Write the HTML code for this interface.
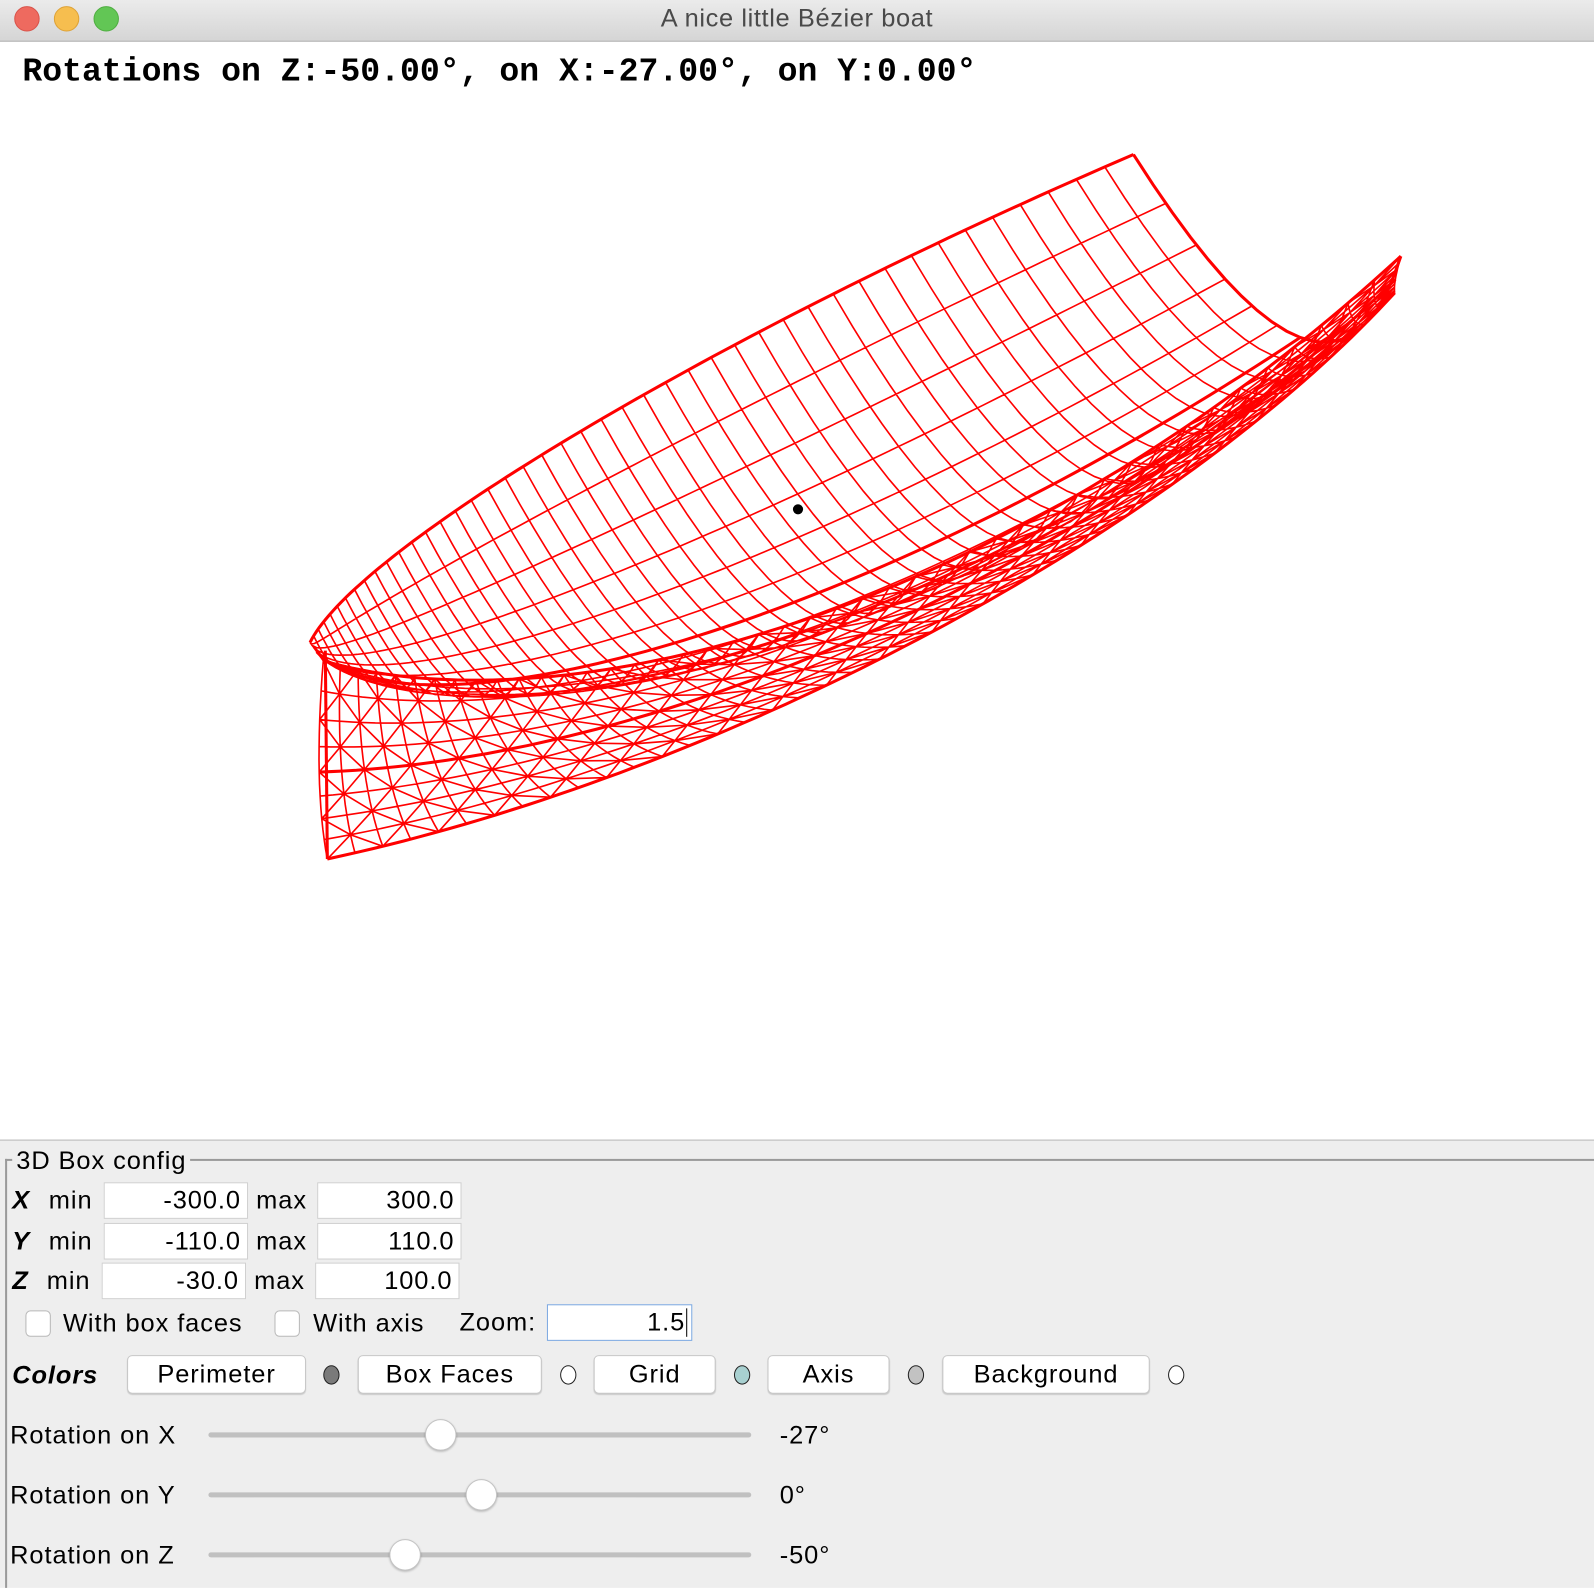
<!DOCTYPE html>
<html><head><meta charset="utf-8"><style>
html,body{margin:0;padding:0;width:1594px;height:1592px;overflow:hidden;background:#fff}
#root{position:absolute;left:0;top:0;width:1568px;height:1566px;transform:scale(1.01658);transform-origin:0 0;font-family:"Liberation Sans",sans-serif;color:#000}
.abs{position:absolute}
#tb{left:0;top:0;width:1568px;height:40px;background:linear-gradient(#ebebeb,#d5d5d5);border-bottom:1px solid #a8a8a8}
.tl{position:absolute;top:6px;width:23px;height:23px;border-radius:50%}
#title{left:0;width:1568px;top:4px;text-align:center;font-size:25px;letter-spacing:0.6px;color:#4a4a4a}
#rot{left:22px;top:52px;font-family:"Liberation Mono",monospace;font-weight:bold;font-size:32.6px;white-space:pre}
#panel{left:0;top:1121px;width:1568px;height:440px;background:#eeeeee;border-top:1px solid #b8b8b8}
.lbl{position:absolute;font-size:25px;line-height:30px;white-space:pre;letter-spacing:0.9px}
.fld{position:absolute;background:#fff;border:1px solid #d0d0d0;box-sizing:border-box;height:36px;font-size:25px;line-height:34px;text-align:right;padding-right:6px;letter-spacing:0.9px}
.cb{position:absolute;width:25px;height:26px;background:#fff;border:1px solid #b8b8b8;border-radius:5px;box-sizing:border-box}
.btn{position:absolute;height:38px;background:#fff;border:1px solid #c8c8c8;border-radius:5px;box-sizing:border-box;font-size:25px;line-height:36px;text-align:center;box-shadow:0 1px 1px rgba(0,0,0,.15);letter-spacing:0.9px}
.dot{position:absolute;width:16px;height:19px;border:1.5px solid #222;border-radius:50%;box-sizing:border-box}
.track{position:absolute;left:205px;width:534px;height:5px;background:#c0c0c0;border-radius:3px}
.thumb{position:absolute;width:31px;height:31px;border-radius:50%;background:#fff;border:1px solid #c4c4c4;box-sizing:border-box;box-shadow:0 1px 2px rgba(0,0,0,.25)}
</style></head><body><div id="root">
<div id="tb" class="abs">
<div class="tl" style="left:14px;background:#ee6a5f;border:1px solid #d9534a"></div>
<div class="tl" style="left:53px;background:#f6be4f;border:1px solid #dea236"></div>
<div class="tl" style="left:92px;background:#62c655;border:1px solid #4fae41"></div>
<div id="title" class="abs">A nice little Bézier boat</div>
</div>
<div id="rot" class="abs">Rotations on Z:-50.00°, on X:-27.00°, on Y:0.00°</div>
<svg class="abs" style="left:0;top:0" width="1568" height="1120" id="boat"></svg>
<div id="panel" class="abs">
<div class="abs" style="left:5px;top:18px;width:1563px;height:2px;background:#9a9a9a"></div>
<div class="abs" style="left:5px;top:18px;width:2px;height:422px;background:#9a9a9a"></div>
<div class="lbl" style="left:12px;top:5px;background:#eee;padding:0 4px">3D Box config</div>
<div class="lbl" style="left:12px;top:44px;font-weight:bold;font-style:italic">X</div>
<div class="lbl" style="left:48px;top:44px">min</div>
<div class="fld" style="left:102px;top:41px;width:142px">-300.0</div>
<div class="lbl" style="left:252px;top:44px">max</div>
<div class="fld" style="left:312px;top:41px;width:142px">300.0</div>
<div class="lbl" style="left:12px;top:84px;font-weight:bold;font-style:italic">Y</div>
<div class="lbl" style="left:48px;top:84px">min</div>
<div class="fld" style="left:102px;top:81px;width:142px">-110.0</div>
<div class="lbl" style="left:252px;top:84px">max</div>
<div class="fld" style="left:312px;top:81px;width:142px">110.0</div>
<div class="lbl" style="left:12px;top:123px;font-weight:bold;font-style:italic">Z</div>
<div class="lbl" style="left:46px;top:123px">min</div>
<div class="fld" style="left:100px;top:120px;width:142px">-30.0</div>
<div class="lbl" style="left:250px;top:123px">max</div>
<div class="fld" style="left:310px;top:120px;width:142px">100.0</div>
<div class="cb" style="left:25px;top:167px"></div>
<div class="lbl" style="left:62px;top:165px">With box faces</div>
<div class="cb" style="left:270px;top:167px"></div>
<div class="lbl" style="left:308px;top:165px">With axis</div>
<div class="lbl" style="left:452px;top:164px">Zoom:</div>
<div class="fld" style="left:538px;top:161px;width:143px;border:1.5px solid #7aa7e0;padding-right:4px">1.5<span style="border-left:1.5px solid #000;margin-left:1px"></span></div>
<div class="lbl" style="left:12px;top:216px;font-weight:bold;font-style:italic">Colors</div>
<div class="btn" style="left:125px;top:211px;width:176px">Perimeter</div>
<div class="dot" style="left:318px;top:221px;background:#7a7a7a"></div>
<div class="btn" style="left:352px;top:211px;width:181px">Box Faces</div>
<div class="dot" style="left:551px;top:221px;background:#fff"></div>
<div class="btn" style="left:584px;top:211px;width:120px">Grid</div>
<div class="dot" style="left:722px;top:221px;background:#a8d0d0"></div>
<div class="btn" style="left:755px;top:211px;width:120px">Axis</div>
<div class="dot" style="left:893px;top:221px;background:#c2c2c2"></div>
<div class="btn" style="left:927px;top:211px;width:204px">Background</div>
<div class="dot" style="left:1149px;top:221px;background:#fff"></div>
<div class="lbl" style="left:10px;top:275px">Rotation on X</div>
<div class="track" style="top:287px"></div>
<div class="thumb" style="left:418px;top:274px"></div>
<div class="lbl" style="left:767px;top:275px">-27°</div>
<div class="lbl" style="left:10px;top:334px">Rotation on Y</div>
<div class="track" style="top:346px"></div>
<div class="thumb" style="left:458px;top:333px"></div>
<div class="lbl" style="left:767px;top:334px">0°</div>
<div class="lbl" style="left:10px;top:393px">Rotation on Z</div>
<div class="track" style="top:405px"></div>
<div class="thumb" style="left:383px;top:392px"></div>
<div class="lbl" style="left:767px;top:393px">-50°</div>
</div>
</div>
<script>
function cub(p,t){var a=1-t;return[a*a*a*p[0][0]+3*a*a*t*p[1][0]+3*a*t*t*p[2][0]+t*t*t*p[3][0],a*a*a*p[0][1]+3*a*a*t*p[1][1]+3*a*t*t*p[2][1]+t*t*t*p[3][1]];}
var F=[[305,632],[350,540],[700,330],[1115,152]];
var N=[[318,650],[560,720],[1000,600],[1378,252]];
var K=[[322,845],[720,760],[1160,520],[1372,288]];
function inner(u,v){var f=cub(F,u),n=cub(N,u);var s=130*Math.pow(Math.sin(u*Math.PI/2),0.7)*4*v*(1-v);return[f[0]+(n[0]-f[0])*v+s*0.25,f[1]+(n[1]-f[1])*v+s];}
function outer(u,v){var n=cub(N,u),k=cub(K,u);var b=4*v*(1-v)*(1-0.6*u);return[n[0]+(k[0]-n[0])*v-6*b,n[1]+(k[1]-n[1])*v+12*b];}
var d="",dt="";
function line(fn,fix,isU,steps){var s="";for(var i=0;i<=steps;i++){var t=i/steps;var p=isU?fn(fix,t):fn(t,fix);s+=(i?"L":"M")+p[0].toFixed(1)+" "+p[1].toFixed(1);}return s;}
for(var i=0;i<=44;i++){var u=i/44;d+=line(inner,u,true,20);d+=line(outer,u,true,16);}
for(var j=0;j<=12;j++){var v=j/12;d+=line(inner,v,false,80);}
for(var j=0;j<=8;j++){var v=j/8;d+=line(outer,v,false,80);}
for(var i=-8;i<=44;i+=2){var s="",s2="";for(var k=0;k<=8;k++){var u=(i+k)/44,u2=(i+8-k)/44;var v=k/8;if(u>=0&&u<=1){var p=outer(u,v);s+=(s?"L":"M")+p[0].toFixed(1)+" "+p[1].toFixed(1);}if(u2>=0&&u2<=1){var q=outer(u2,v);s2+=(s2?"L":"M")+q[0].toFixed(1)+" "+q[1].toFixed(1);}}d+=s+s2;}
dt+=line(inner,0,false,80)+line(inner,1,false,80)+line(outer,1,false,80)+line(inner,1,true,20)+line(inner,0.5,false,80)+line(outer,0.5,false,80);
var svg=document.getElementById('boat');
svg.innerHTML='<path d="'+d+'" fill="none" stroke="#ff0000" stroke-width="1.6"/><path d="'+dt+'" fill="none" stroke="#ff0000" stroke-width="3"/><path d="M320 640L322 845" stroke="#ff0000" stroke-width="3"/><circle cx="785" cy="501" r="5" fill="#000"/>';
</script>
</body></html>
